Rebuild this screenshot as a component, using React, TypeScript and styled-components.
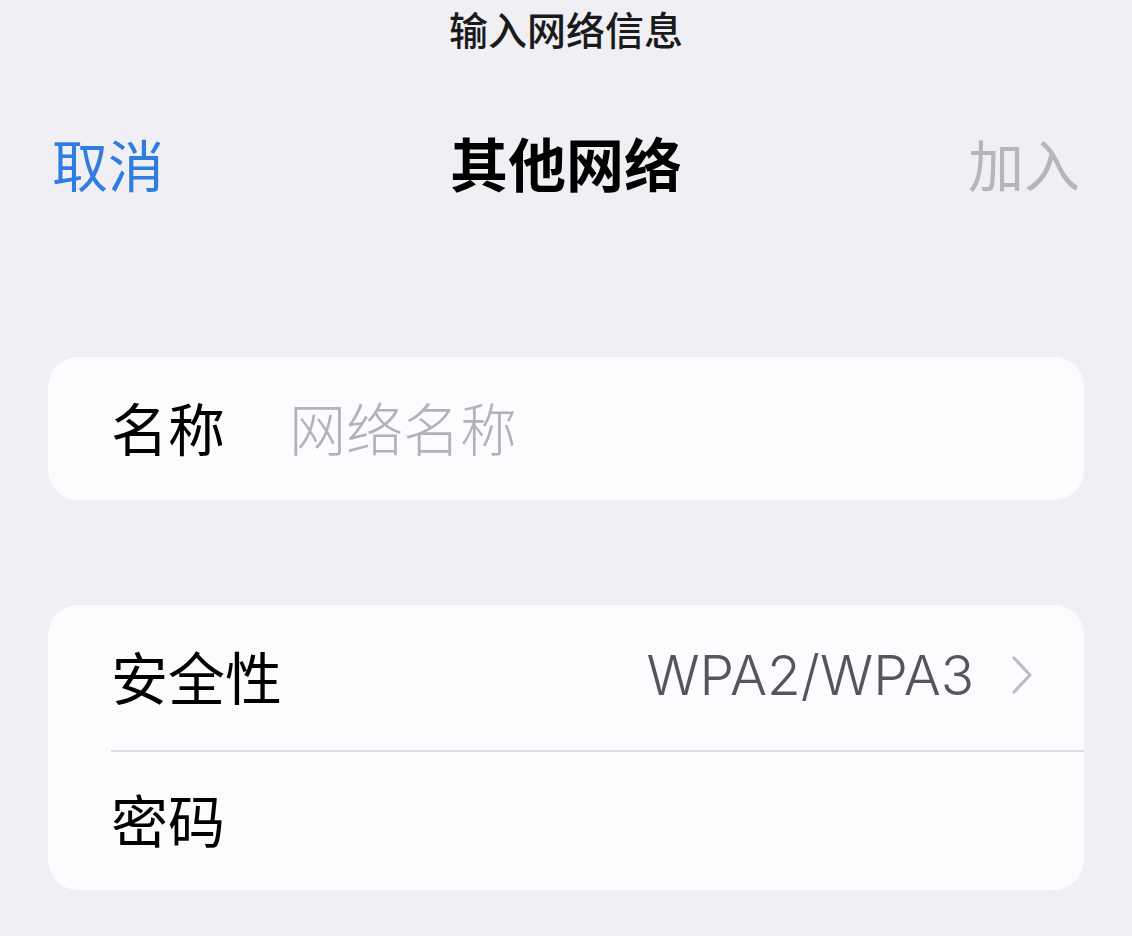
import styled, { createGlobalStyle } from "styled-components"

const Global = createGlobalStyle`
  html, body {
    margin: 0;
    padding: 0;
    background: #efeff4;
  }
  body {
    font-family: "Noto Sans CJK SC", "Noto Sans", sans-serif;
    color: #000;
  }
`

function Chevron() {
  return (
    <ChevronIcon viewBox="0 0 20 38" width="20" height="38">
      <polyline points="2,2 18,19 2,36" fill="none" stroke="#bdbcc1" strokeWidth="3.2" strokeLinecap="round" strokeLinejoin="round" />
    </ChevronIcon>
  )
}

export default function App() {
  return (
    <Root>
      <Global />
      <Prompt>输入网络信息</Prompt>
      <NavBar>
        <NavButton tone="#2f7de1">取消</NavButton>
        <NavTitle>其他网络</NavTitle>
        <NavButton tone="#b6b5ba">加入</NavButton>
      </NavBar>

      <Card gap={157}>
        <Row h={143}>
          <Label>名称</Label>
          <Placeholder>网络名称</Placeholder>
        </Row>
      </Card>

      <Card gap={105}>
        <Row h={147} divided>
          <Label>安全性</Label>
          <Value>
            <span>WPA2/WPA3</span>
            <Chevron />
          </Value>
        </Row>
        <Row h={138}>
          <Label>密码</Label>
        </Row>
      </Card>
    </Root>
  )
}

const Root = styled.main`
  width: 1132px;
  height: 936px;
  display: flex;
  flex-direction: column;
  box-sizing: border-box;
  overflow: hidden;
`

const Prompt = styled.div`
  height: 64px;
  box-sizing: border-box;
  padding-bottom: 8px;
  display: flex;
  align-items: center;
  justify-content: center;
  font-size: 39px;
  font-weight: 500;
  color: #1a1a1c;
`

const NavBar = styled.header`
  margin-top: 66px;
  height: 70px;
  box-sizing: border-box;
  padding: 0 52px 6px;
  display: flex;
  align-items: center;
  justify-content: space-between;
`

const NavButton = styled.span<{ tone: string }>`
  font-size: 56px;
  color: ${p => p.tone};
  width: 112px;
  &:last-child {
    text-align: right;
  }
`

const NavTitle = styled.h1`
  margin: 0;
  font-size: 58px;
  font-weight: 700;
  color: #000;
`

const Card = styled.section<{ gap: number }>`
  margin: ${p => p.gap}px 48px 0 48px;
  background: #fbfcfe;
  border-radius: 30px;
  padding-left: 63px;
  display: flex;
  flex-direction: column;
  overflow: hidden;
`

const Row = styled.div<{ h: number; divided?: boolean }>`
  height: ${p => p.h}px;
  box-sizing: border-box;
  display: flex;
  align-items: center;
  padding: 0 52px 6px 0;
  border-bottom: ${p => (p.divided ? "2px solid #dedee2" : "none")};
`

const Label = styled.span`
  font-size: 57px;
  color: #000;
  width: 178px;
  flex-shrink: 0;
`

const Placeholder = styled.span`
  font-size: 57px;
  font-weight: 300;
  color: #b4b1b7;
`

const Value = styled.span`
  margin-left: auto;
  display: flex;
  align-items: center;
  gap: 38px;
  font-family: "Inter", "Noto Sans", sans-serif;
  font-weight: 300;
  font-size: 55px;
  color: #59545c;
`

const ChevronIcon = styled.svg`
  display: block;
`
